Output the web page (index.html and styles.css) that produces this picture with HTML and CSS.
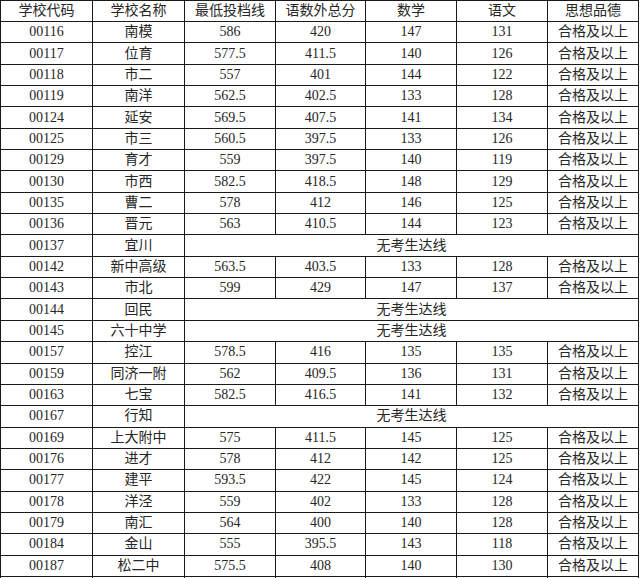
FILE: index.html
```html
<!DOCTYPE html>
<html lang="zh-CN">
<head>
<meta charset="utf-8">
<title>最低投档线</title>
<link rel="stylesheet" href="styles.css">
</head>
<body>
<table class="grid">
<colgroup>
<col class="c1"><col class="c2"><col class="c3"><col class="c4"><col class="c5"><col class="c6"><col class="c7">
</colgroup>
<thead>
<tr class="head"><th>学校代码</th><th>学校名称</th><th>最低投档线</th><th>语数外总分</th><th>数学</th><th>语文</th><th>思想品德</th></tr>
</thead>
<tbody>
<tr><td>00116</td><td>南模</td><td>586</td><td>420</td><td>147</td><td>131</td><td>合格及以上</td></tr>
<tr><td>00117</td><td>位育</td><td>577.5</td><td>411.5</td><td>140</td><td>126</td><td>合格及以上</td></tr>
<tr><td>00118</td><td>市二</td><td>557</td><td>401</td><td>144</td><td>122</td><td>合格及以上</td></tr>
<tr><td>00119</td><td>南洋</td><td>562.5</td><td>402.5</td><td>133</td><td>128</td><td>合格及以上</td></tr>
<tr><td>00124</td><td>延安</td><td>569.5</td><td>407.5</td><td>141</td><td>134</td><td>合格及以上</td></tr>
<tr><td>00125</td><td>市三</td><td>560.5</td><td>397.5</td><td>133</td><td>126</td><td>合格及以上</td></tr>
<tr><td>00129</td><td>育才</td><td>559</td><td>397.5</td><td>140</td><td>119</td><td>合格及以上</td></tr>
<tr><td>00130</td><td>市西</td><td>582.5</td><td>418.5</td><td>148</td><td>129</td><td>合格及以上</td></tr>
<tr><td>00135</td><td>曹二</td><td>578</td><td>412</td><td>146</td><td>125</td><td>合格及以上</td></tr>
<tr><td>00136</td><td>晋元</td><td>563</td><td>410.5</td><td>144</td><td>123</td><td>合格及以上</td></tr>
<tr><td>00137</td><td>宜川</td><td colspan="5">无考生达线</td></tr>
<tr><td>00142</td><td>新中高级</td><td>563.5</td><td>403.5</td><td>133</td><td>128</td><td>合格及以上</td></tr>
<tr><td>00143</td><td>市北</td><td>599</td><td>429</td><td>147</td><td>137</td><td>合格及以上</td></tr>
<tr><td>00144</td><td>回民</td><td colspan="5">无考生达线</td></tr>
<tr><td>00145</td><td>六十中学</td><td colspan="5">无考生达线</td></tr>
<tr><td>00157</td><td>控江</td><td>578.5</td><td>416</td><td>135</td><td>135</td><td>合格及以上</td></tr>
<tr><td>00159</td><td>同济一附</td><td>562</td><td>409.5</td><td>136</td><td>131</td><td>合格及以上</td></tr>
<tr><td>00163</td><td>七宝</td><td>582.5</td><td>416.5</td><td>141</td><td>132</td><td>合格及以上</td></tr>
<tr><td>00167</td><td>行知</td><td colspan="5">无考生达线</td></tr>
<tr><td>00169</td><td>上大附中</td><td>575</td><td>411.5</td><td>145</td><td>125</td><td>合格及以上</td></tr>
<tr><td>00176</td><td>进才</td><td>578</td><td>412</td><td>142</td><td>125</td><td>合格及以上</td></tr>
<tr><td>00177</td><td>建平</td><td>593.5</td><td>422</td><td>145</td><td>124</td><td>合格及以上</td></tr>
<tr><td>00178</td><td>洋泾</td><td>559</td><td>402</td><td>133</td><td>128</td><td>合格及以上</td></tr>
<tr><td>00179</td><td>南汇</td><td>564</td><td>400</td><td>140</td><td>128</td><td>合格及以上</td></tr>
<tr><td>00184</td><td>金山</td><td>555</td><td>395.5</td><td>143</td><td>118</td><td>合格及以上</td></tr>
<tr><td>00187</td><td>松二中</td><td>575.5</td><td>408</td><td>140</td><td>130</td><td>合格及以上</td></tr>
<tr><td></td><td></td><td></td><td></td><td></td><td></td><td></td></tr>
</tbody>
</table>
</body>
</html>
```

FILE: styles.css
```css
html, body {
  margin: 0;
  padding: 0;
  background: #ffffff;
}

body {
  overflow: hidden;
  height: 578px;
}

.grid {
  border-collapse: collapse;
  table-layout: fixed;
  width: 639px;
  margin-left: 0;
  font-family: "Liberation Serif", "Noto Sans CJK SC", serif;
  font-size: 14px;
  color: #262626;
}

.c1 { width: 92px; }
.c2 { width: 92px; }
.c3 { width: 91px; }
.c4 { width: 90px; }
.c5 { width: 91px; }
.c6 { width: 91px; }
.c7 { width: 91px; }

.grid th,
.grid td {
  border: 1px solid #1a1a1a;
  padding: 0;
  text-align: center;
  vertical-align: middle;
  font-weight: normal;
  line-height: 16px;
  white-space: nowrap;
  overflow: hidden;
}

.grid .head {
  height: 21px;
}

.grid tbody tr {
  height: 21.35px;
}
```
